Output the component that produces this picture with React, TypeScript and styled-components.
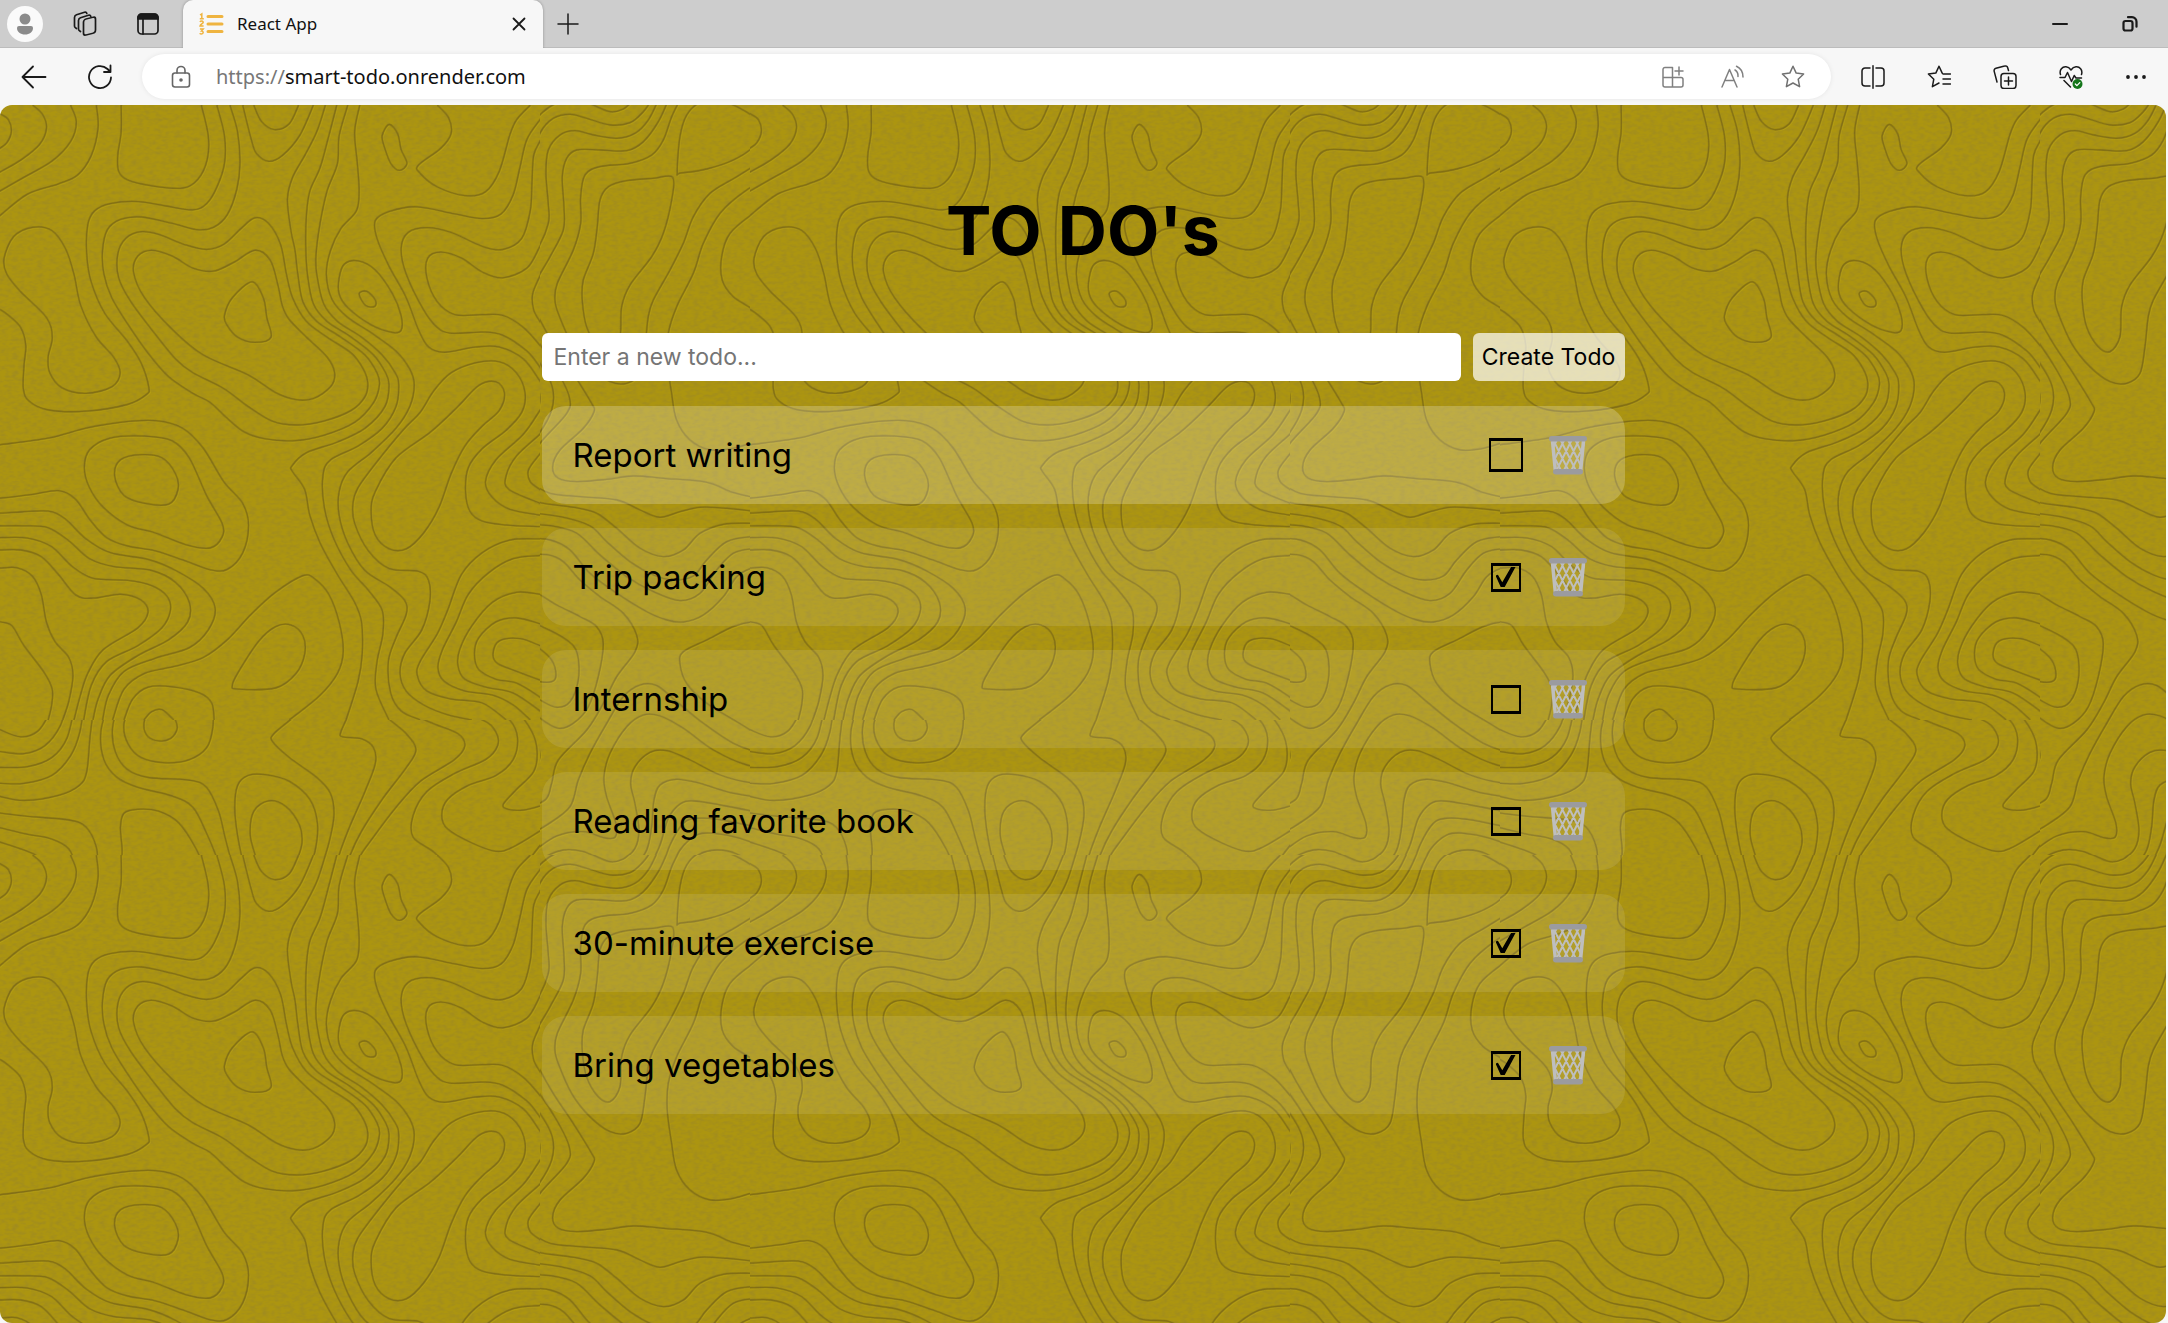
import React, { useState } from "react";
import styled, { createGlobalStyle } from "styled-components";

const uiFont = `"Noto Sans", "Open Sans", sans-serif`;
const appFont = `Inter, Roboto, sans-serif`;

const GlobalStyle = createGlobalStyle`
  *, *::before, *::after { box-sizing: border-box; }
  body { margin: 0; background: #f7f7f7; }
  button, input { font: inherit; color: inherit; }
`;

/* ---------- topographic backdrop ---------- */

type Sheet = {
  id: string;
  clip: { x: number; y: number; width: number; height: number };
  scale: [number, number];
  origin: [number, number];
  lines: string[];
};

const TILE = 750;

const sheets: Sheet[] = [
  {
    id: "nw",
    clip: { x: 0, y: 0, width: 540, height: 615 },
    scale: [2.904, 2.529],
    origin: [0, -5],
    lines: [
      "-15,28 0,35 25,50 33,80 20,108 0,122 -15,130",
      "95,13 125,38 135,72 115,112 60,152 0,182 -10,186",
      "205,13 222,55 205,105 150,155 60,200 0,230 -10,235",
      "280,13 285,70 265,140 225,190 170,212 80,238 0,292 -10,300",
      "352,13 352,80 342,140 345,180 370,202 440,217 530,223 575,200 602,150 605,90 585,13",
      "630,13 652,90 652,160 630,220 600,262 560,278 480,268 400,257 320,262 275,280 255,315 252,390 265,460 305,540 370,610 410,665 432,725 425,745 370,770 250,787 140,784 85,762 68,730 70,670 75,620 60,575 25,545 0,530 -10,526",
      "668,13 690,80 697,160 688,225 660,290 620,322 570,328 500,312 410,296 350,302 312,328 298,380 302,440 325,500 370,565 430,640 490,700 560,742 610,765 660,805 710,840 770,857 850,862 940,848 1030,815 1085,765 1102,720 1095,690 1060,645 990,600 920,560 880,510 865,440 857,380 845,330 835,250 850,195 885,140 920,80 945,13",
      "705,13 730,100 745,135 780,155 820,140 870,90 910,13",
      "737,13 760,55 797,75 840,60 867,13",
      "978,13 955,90 930,170 900,230 890,290 888,370 893,440 910,515 950,560 1020,600 1085,645 1120,690 1130,720 1118,775 1060,830 980,865 890,892 848,925 850,940 885,985 900,1050 930,1120 980,1200 1030,1270 1050,1320 1052,1400 1040,1470 1005,1568",
      "1010,13 985,90 980,160 950,230 930,310 918,390 920,440 940,515 980,560 1050,600 1110,645 1148,690 1158,720 1150,775 1110,830 1040,875 960,910 938,950 942,1030 970,1110 1020,1190 1070,1240 1110,1290 1112,1350 1095,1420 1092,1490 1130,1568",
      "1045,13 1030,80 1038,160 1043,230 1035,280 990,325 960,380 948,440 965,505 1010,550 1080,590 1150,635 1190,680 1203,720 1190,775 1150,830 1080,890 1010,940 985,990 985,1050 1010,1120 1060,1190 1130,1230 1175,1265 1180,1300 1150,1360 1128,1420 1135,1500 1165,1545 1220,1568",
      "1568,1079 1470,1075 1400,1065 1365,1040 1352,990 1360,930 1400,882 1470,835 1515,790 1525,740 1500,690 1450,662 1380,665 1310,690 1260,735 1220,790 1170,835 1090,920 1040,980 1025,1020 1030,1070 1070,1140 1130,1185 1215,1192 1245,1215 1248,1270 1225,1340 1175,1400 1162,1450 1180,1495 1230,1530 1300,1555 1370,1568",
      "1078,1040 1090,990 1150,905 1250,840 1330,775 1390,722 1440,713 1465,740 1450,785 1400,825 1350,875 1310,945 1275,1030 1230,1095 1180,1135 1130,1135 1090,1100 z",
      "1110,90 1130,62 1155,85 1165,125 1182,160 1160,178 1135,160 1117,120 z",
      "1270,13 1303,45 1310,85 1280,122 1215,165 1220,185 1270,220 1350,242 1410,232 1450,180 1480,90 1500,50 1540,13",
      "1580,40 1568,50 1530,100 1510,170 1490,240 1455,288 1400,300 1320,288 1210,270 1130,282 1090,305 1095,350 1130,420 1180,500 1215,580 1245,625 1290,638 1380,625 1450,625 1520,655 1568,710 1580,725",
      "1580,90 1568,105 1550,140 1545,210 1540,280 1515,350 1460,378 1400,370 1310,335 1240,323 1185,335 1165,375 1180,440 1230,530 1270,575 1310,590 1400,587 1460,595 1530,635 1568,675 1580,690",
      "1580,355 1568,370 1530,425 1460,450 1400,435 1340,400 1280,385 1242,400 1240,450 1270,510 1320,543 1400,543 1460,545 1520,575 1568,620 1580,635",
      "1580,425 1568,445 1547,490 1550,530 1568,560 1580,575",
      "1580,770 1568,785 1520,845 1440,910 1410,965 1430,1005 1480,1035 1568,1050 1580,1051",
      "1580,832 1568,845 1500,900 1470,950 1478,985 1568,1020 1580,1023",
      "1580,882 1568,895 1535,935 1540,965 1568,985 1580,990",
      "985,450 1000,415 1040,407 1090,430 1140,490 1165,545 1165,582 1140,588 1080,570 1010,525 985,490 z",
      "1043,490 1065,484 1090,505 1088,522 1062,520 z",
      "12,400 40,345 95,322 150,330 190,375 215,440 235,520 280,600 330,650 349,690 325,725 250,742 180,728 145,690 140,650 152,600 135,550 60,485 20,440 z",
      "652,545 675,500 732,460 765,500 775,550 787,600 740,613 690,600 660,570 z",
      "440,380 500,395 560,425 620,433 680,410 740,380 785,405 808,470 820,520 840,555 890,600 950,650 972,690 960,725 910,755 860,758 800,740 720,695 590,645 500,580 420,500 388,435 400,395 z",
      "740,298 780,312 815,365 832,440 850,500 890,560 950,600 1020,640 1055,680 1068,715 1060,750 1020,785 940,812 860,822 790,812 720,775 650,730 560,690 510,655 440,580 380,510 345,450 342,390 365,350 410,333 460,340 540,367 600,378 650,365 700,325 z",
      "-10,873 0,872 140,855 250,830 350,815 450,811 530,830 590,880 650,965 705,1020 722,1075 705,1145 660,1187 610,1188 530,1163 450,1140 370,1128 310,1107 260,1060 220,1010 170,988 90,998 0,1007 -10,1007",
      "-10,1045 0,1045 60,1042 140,1040 190,1060 250,1110 320,1145 430,1162 510,1190 590,1235 625,1285 605,1340 550,1385 450,1412 360,1445 315,1505 298,1568",
      "-10,1077 0,1077 70,1077 140,1082 200,1115 260,1160 330,1180 440,1190 510,1220 550,1270 545,1320 490,1365 400,1405 320,1455 285,1515 270,1568",
      "-10,1107 0,1107 80,1108 150,1130 210,1180 270,1210 370,1215 440,1228 485,1255 495,1290 470,1335 400,1380 310,1420 265,1480 243,1568",
      "-10,1138 0,1138 60,1138 120,1155 170,1200 220,1252 270,1260 350,1250 410,1265 430,1295 400,1335 300,1390 255,1450 232,1510 215,1568",
      "-10,1184 0,1184 50,1183 95,1205 120,1250 135,1320 160,1370 200,1410 212,1455 200,1520 182,1568",
      "-10,1319 0,1320 35,1330 70,1380 130,1450 152,1490 150,1530 140,1568",
      "840,1568 930,1505 980,1450 997,1395 985,1320 955,1250 915,1212 880,1203 800,1245 730,1300 660,1365 590,1410 510,1432 420,1450 360,1490 327,1568",
      "675,1480 690,1450 750,1370 800,1332 845,1328 880,1355 885,1400 860,1450 800,1487 690,1490 z",
      "360,1568 385,1515 430,1485 500,1484 580,1500 615,1525 622,1568",
      "418,1568 440,1547 470,1542 505,1568",
      "245,930 260,885 320,855 420,850 500,862 550,905 600,1000 645,1070 645,1105 610,1133 540,1125 450,1095 370,1075 300,1030 260,980 z",
      "333,950 350,910 410,897 470,905 510,945 517,985 490,1022 420,1020 360,1000 z",
      "1580,1110 1568,1110 1480,1113 1400,1145 1340,1200 1300,1290 1270,1350 1220,1420 1212,1455 1240,1495 1310,1515 1400,1525 1470,1568",
      "1580,1152 1568,1152 1490,1160 1420,1195 1360,1250 1325,1320 1285,1390 1272,1435 1290,1470 1350,1495 1430,1505 1490,1530 1540,1568",
      "1580,1252 1568,1250 1500,1245 1430,1270 1370,1330 1335,1390 1330,1430 1350,1465 1410,1485 1490,1500 1568,1545 1580,1555",
      "1580,1330 1568,1325 1500,1310 1440,1320 1390,1360 1378,1400 1390,1440 1440,1465 1500,1475 1568,1510 1580,1518",
      "1580,1385 1568,1380 1510,1362 1450,1368 1432,1400 1445,1425 1500,1445 1568,1467 1580,1470",
    ],
  },
  {
    id: "sw",
    clip: { x: 0, y: 615, width: 540, height: 135 },
    scale: [2.904, 2.517],
    origin: [0, 595],
    lines: [
      "-10,70 0,75 60,93 110,78 145,30 152,0",
      "-10,129 0,130 70,135 130,115 175,65 195,0",
      "-10,170 0,170 80,168 150,145 195,95 220,0",
      "-10,210 0,210 70,210 150,190 205,140 232,80 245,0",
      "-10,242 0,243 70,253 170,240 230,215 252,180 262,90 275,0",
      "317,0 293,80 302,150 340,195 400,220 500,242 560,270 600,335 635,410 650,460",
      "347,0 327,70 335,130 370,175 430,195 550,202 600,220 635,280 655,350 680,430",
      "387,0 360,60 372,110 410,145 480,158 550,150 600,120 618,70 620,0",
      "418,65 430,35 465,24 500,38 515,70 495,97 460,103 430,92 z",
      "-10,284 0,285 80,293 200,302 250,320 280,370 285,430",
      "-10,320 0,322 80,338 150,350 200,375 222,420",
      "-10,356 0,358 70,378 110,395 135,430",
      "350,430 355,380 350,320 360,285 400,275 460,280 520,310 570,375 600,440",
      "740,500 710,420 690,340 682,270 690,215 720,190 770,188 840,205 900,250 922,310 915,380 890,440",
      "745,400 727,340 737,280 780,254 830,268 870,315 877,360 862,405",
      "910,0 850,45 795,85 792,105 840,145 920,195 960,235 970,290 955,360 930,430",
      "1025,0 1010,40 990,80 995,93 1050,98 1085,120 1090,160 1060,230 1015,320 985,390 970,450",
      "1095,0 1120,40 1180,85 1208,125 1180,170 1110,250 1050,330 1015,395 1000,450",
      "1145,0 1180,30 1260,60 1330,85 1350,115 1320,150 1220,205 1150,270 1080,350 1045,395 1035,440",
      "1215,0 1290,25 1400,50 1440,80 1445,115 1410,150 1320,185 1240,230 1200,290 1200,345 1260,383 1300,420",
      "1310,0 1420,18 1480,50 1503,95 1490,150 1440,190 1360,215 1300,250 1283,290 1300,325 1370,360 1440,381 1490,370 1568,330 1580,323",
      "1420,0 1500,30 1545,80 1560,130 1550,180 1500,225 1462,262 1475,275 1520,277 1568,267 1580,262",
      "1515,0 1568,45 1580,60",
      "1580,360 1568,367 1530,410",
    ],
  },
  {
    id: "east",
    clip: { x: 540, y: 0, width: 210, height: 750 },
    scale: [3, 3],
    origin: [520, -5],
    lines: [
      "0,190 25,90 70,35 110,10 160,2 210,12 270,35 310,27 340,0",
      "0,415 30,360 38,260 38,180 60,100 100,55 150,43 200,55 270,75 330,68 370,35 395,0",
      "0,505 50,450 85,370 85,310 78,220 85,150 120,105 165,92 220,105 290,115 345,100 385,60 415,0",
      "780,1183 710,1192 640,1178 560,1147 430,1135 340,1128 260,1138 170,1145 115,1135 98,1100 120,1050 190,985 222,935 215,910 160,820 100,730 50,640 35,600 45,550 90,470 130,390 132,320 127,230 140,175 170,150 240,150 320,152 370,125 415,65 445,0",
      "780,150 650,230 570,280 520,350 490,430 450,510 400,600 385,650 375,740 360,820 320,850 270,845 210,800 155,730 115,640 105,600 112,550 160,450 182,370 182,290 195,225 240,200 330,190 395,165 430,120 455,50 480,0",
      "458,232 455,300 430,400 395,470 330,555 305,620 300,710 270,755 235,740 200,680 187,600 190,540 220,460 232,380 240,300 265,260 320,242 400,235 z",
      "472,215 480,110 500,45 540,8 600,3 660,25 710,60 722,95 700,140 640,180 560,207 482,219 z",
      "780,215 680,270 600,340 550,430 520,520 470,620 445,700 442,780 455,880 470,960 510,1020 570,1050 640,1045 720,1022 780,1015",
      "780,290 700,340 630,400 605,470 607,540 640,590 700,630 750,680 768,730 758,800 765,870 780,900",
      "0,670 50,720 110,810 148,890 140,940 60,1030 22,1100 35,1145 90,1180 180,1190 290,1200 360,1230 420,1252 480,1235 540,1222 620,1225 720,1235 780,1233",
      "0,720 60,790 97,860 95,930 50,1010 0,1055",
      "0,770 40,830 60,890 45,950 0,1005",
      "0,1190 70,1210 160,1222 230,1240 290,1285 360,1345 430,1370 490,1350 540,1300 610,1273 700,1270 780,1272",
      "0,1235 120,1250 210,1278 260,1325 330,1385 400,1425 460,1440 520,1428 560,1380 620,1325 700,1310 780,1313",
      "0,1273 90,1277 170,1300 240,1365 320,1430 400,1475 480,1502 540,1480 590,1410 640,1360 700,1347 780,1355",
      "0,1313 90,1320 150,1350 210,1420 290,1480 380,1535 440,1560 490,1566 550,1545 610,1490 650,1430 700,1403 740,1403 780,1425",
      "0,1365 80,1364 130,1385 180,1440 240,1490 310,1540 350,1605 345,1655 290,1730 250,1810 200,1890 115,1980 95,2050 75,2100 0,2133",
      "0,1473 50,1480 110,1515 180,1550 230,1580 250,1630 235,1730 205,1820 160,1870 115,1885 60,1855 0,1800",
      "0,1557 70,1582 140,1620 172,1660 175,1740 150,1805 110,1822 60,1800 0,1762",
      "0,1615 50,1640 95,1680 108,1725 95,1745 50,1743 0,1722",
      "0,1845 40,1900 60,1965 45,2000 0,2055",
      "0,2220 80,2175 150,2120 175,2040 210,1960 260,1870 310,1790 360,1755 410,1757 470,1805 550,1870 640,1930 720,1958 780,1961",
      "0,2290 40,2255 110,2208 190,2195 250,2213 285,2212 288,2170 260,2090 252,2030 270,1960 320,1880 370,1845 420,1848 490,1885 580,1950 680,1995 780,2006",
      "30,2320 70,2275 130,2250 190,2255 260,2284 310,2275 345,2245 357,2190 345,2110 332,2050 345,2000 390,1957 440,1952 510,1980 600,2025 690,2048 780,2050",
      "340,2310 380,2250 395,2180 402,2100 420,2055 470,2038 540,2050 640,2080 780,2100",
      "385,2310 420,2235 445,2155 480,2112 520,2103 600,2115 780,2150",
      "425,2310 450,2235 490,2170 530,2155 590,2158 680,2175 780,2200",
      "455,2310 480,2250 530,2205 580,2200 660,2215 780,2260",
      "500,2310 535,2265 590,2250 650,2262 720,2310",
      "790,1660 740,1590 700,1567 640,1580 560,1620 490,1655 480,1690 500,1750 560,1810 650,1865 720,1905 780,1908",
    ],
  },
];

/* Runs a Catmull-Rom curve through the points and returns it as Bezier segments. */
function contour(line: string, { scale, origin }: Sheet): string {
  const closed = line.endsWith("z");
  const pts = line
    .replace("z", "")
    .trim()
    .split(" ")
    .map((pair) => {
      const [x, y] = pair.split(",").map(Number);
      return [x / scale[0] + origin[0], y / scale[1] + origin[1]];
    });
  const n = pts.length;
  const at = (i: number) => (closed ? pts[(i + n) % n] : pts[Math.max(0, Math.min(n - 1, i))]);
  const f = (v: number) => v.toFixed(1);
  let d = `M${f(pts[0][0])} ${f(pts[0][1])}`;
  for (let i = 0; i < (closed ? n : n - 1); i++) {
    const [a, b, c, e] = [at(i - 1), at(i), at(i + 1), at(i + 2)];
    d += `C${f(b[0] + (c[0] - a[0]) / 6)} ${f(b[1] + (c[1] - a[1]) / 6)} ${f(c[0] - (e[0] - b[0]) / 6)} ${f(
      c[1] - (e[1] - b[1]) / 6
    )} ${f(c[0])} ${f(c[1])}`;
  }
  return closed ? d + "Z" : d;
}

const sheetPaths = sheets.map((s) => ({ ...s, d: s.lines.map((l) => contour(l, s)).join("") }));

const BackdropSvg = styled.svg`
  position: absolute;
  inset: 0;
  width: 100%;
  height: 100%;
`;

function Backdrop() {
  return (
    <BackdropSvg aria-hidden="true">
      <defs>
        <filter id="grain" x="0" y="0" width="100%" height="100%">
          <feTurbulence type="fractalNoise" baseFrequency="0.16 0.3" numOctaves="2" seed="4" />
          <feColorMatrix values="0 0 0 0 0.24  0 0 0 0 0.18  0 0 0 0 0.05  0.6 0 0 0 -0.22" />
        </filter>
        <clipPath id="basket-body">
          <path d="M2 5h34l-3.500 29h-27z" />
        </clipPath>
        {sheetPaths.map((s) => (
          <clipPath key={s.id} id={`clip-${s.id}`}>
            <rect {...s.clip} />
          </clipPath>
        ))}
        <pattern id="topo" width={TILE} height={TILE} patternUnits="userSpaceOnUse">
          {sheetPaths.map((s) => (
            <g key={s.id} clipPath={`url(#clip-${s.id})`} fill="none">
              <path d={s.d} stroke="#c4ad16" strokeOpacity="0.4" strokeWidth="1.200" transform="translate(1 1)" />
              <path d={s.d} stroke="#5c4c14" strokeOpacity="0.2" strokeWidth="2.400" />
              <path d={s.d} stroke="#5c4c14" strokeOpacity="0.36" strokeWidth="1.300" />
            </g>
          ))}
        </pattern>
      </defs>
      <rect width="100%" height="100%" fill="#ac9510" />
      <rect width="100%" height="100%" filter="url(#grain)" />
      <rect width="100%" height="100%" fill="url(#topo)" />
    </BackdropSvg>
  );
}

/* ---------- browser frame ---------- */

const Shell = styled.div`
  min-height: 100vh;
  display: flex;
  flex-direction: column;
  background: #f7f7f7;
  font-family: ${uiFont};
`;

const TabStrip = styled.header`
  display: flex;
  align-items: center;
  height: 48px;
  padding: 0 3px 0 7px;
  background: #cdcdcd;
  box-shadow: inset 0 -1px 0 #bcbcbc;
`;

const IconButton = styled.button<{ $width: number; $tone?: string }>`
  display: flex;
  align-items: center;
  justify-content: center;
  flex: none;
  width: ${(p) => p.$width}px;
  height: 44px;
  padding: 0;
  border: 0;
  background: none;
  color: ${(p) => p.$tone ?? "#1a1a1a"};
`;

const Avatar = styled.button`
  display: flex;
  flex: none;
  width: 36px;
  height: 36px;
  margin-right: 10px;
  padding: 0;
  border: 0;
  border-radius: 50%;
  background: #fafafa;
`;

const Tab = styled.div`
  display: flex;
  align-items: center;
  gap: 13px;
  align-self: stretch;
  width: 360px;
  margin-left: 4px;
  padding: 0 3px 0 15px;
  border-radius: 10px 10px 0 0;
  background: #f7f7f7;
  box-shadow: 0 0 3px rgba(0, 0, 0, 0.3);
  clip-path: inset(0 -4px 0 -4px);
  font-size: 17px;
  line-height: 24px;
`;

const TabTitle = styled.span`
  flex: 1;
  color: #111;
`;

const Spacer = styled.div`
  flex: 1;
`;

const Toolbar = styled.nav`
  display: flex;
  align-items: center;
  height: 57px;
  padding-left: 1px;
`;

const AddressBar = styled.div`
  display: flex;
  align-items: center;
  flex: 1;
  height: 45px;
  margin: 0 9px;
  padding: 0 8px;
  border-radius: 23px;
  background: #fff;
  box-shadow: 0 0 5px rgba(0, 0, 0, 0.08);
`;

const Address = styled.div`
  flex: 1;
  padding-left: 5px;
  font-size: 20px;
  line-height: 28px;
  color: #111;
`;

const Scheme = styled.span`
  color: #777;
`;

const Line = ({ size = 24, children, w = 1.5 }: { size?: number; w?: number; children: React.ReactNode }) => (
  <svg
    width={size}
    height={size}
    viewBox={`0 0 ${size} ${size}`}
    fill="none"
    stroke="currentColor"
    strokeWidth={w}
    strokeLinecap="round"
    strokeLinejoin="round"
    aria-hidden="true"
  >
    {children}
  </svg>
);

const STAR = "M12 1.2l3.2 6.9 7.4.9-5.4 5.2 1.4 7.5-6.6-3.7-6.6 3.7 1.4-7.5L1.400 9l7.4-.9z";

function BrowserFrame({ children }: { children: React.ReactNode }) {
  return (
    <Shell>
      <TabStrip>
        <Avatar aria-label="Profile">
          <svg width="36" height="36" viewBox="0 0 36 36" fill="#8b8b8b" aria-hidden="true">
            <circle cx="18" cy="13" r="5.500" />
            <path d="M10 22a2 2 0 0 1 2-2h12a2 2 0 0 1 2 2c0 4-3.500 6.500-8 6.500s-8-2.500-8-6.500z" />
          </svg>
        </Avatar>
        <IconButton $width={63} aria-label="Workspaces">
          <Line size={26} w={1.7}>
            <rect x="11.500" y="7.500" width="12" height="16" rx="2.500" transform="skewY(-14) translate(0 4)" />
            <path d="M8.500 20.500l-1.200-.9a2 2 0 0 1-.8-1.600V9.500a3 3 0 0 1 2-2.700l8-2.600a1.800 1.800 0 0 1 2.300 1.200" />
            <path d="M4.500 17.500l-1.200-.9a2 2 0 0 1-.8-1.600V6.500a3 3 0 0 1 2-2.700l8-2.600A1.800 1.800 0 0 1 14.800 2.400" />
          </Line>
        </IconButton>
        <IconButton $width={63} aria-label="Tab actions">
          <Line size={24} w={1.7}>
            <rect x="2" y="2" width="20" height="20" rx="3.500" />
            <path d="M2 7V5.500A3.500 3.500 0 0 1 5.500 2h13A3.500 3.500 0 0 1 22 5.500V7z" fill="currentColor" />
            <path d="M7 7v15" />
          </Line>
        </IconButton>
        <Tab>
          <svg width="26" height="24" viewBox="0 0 26 24" fill="none" stroke="#efb440" aria-hidden="true">
            <path d="M10 4.500h14M10 12h14M10 19.500h14" strokeWidth="3" strokeLinecap="round" />
            <path
              d="M2 3l1.800-1.200V6.500M1.800 6.800h4M2 10c.6-1.300 3.400-1.200 3.200.4-.1 1.200-3 2-3.200 3.600h3.600M1.900 17h3.300l-1.700 2c2.400.2 2.200 3-.1 3-.8 0-1.300-.3-1.700-.8"
              strokeWidth="1.500"
            />
          </svg>
          <TabTitle>React App</TabTitle>
          <IconButton $width={42} aria-label="Close tab">
            <Line size={16} w={1.8}>
              <path d="M2.500 2.500l11 11M13.500 2.500l-11 11" />
            </Line>
          </IconButton>
        </Tab>
        <IconButton $width={50} aria-label="New tab">
          <Line size={22}>
            <path d="M11 1v20M1 11h20" />
          </Line>
        </IconButton>
        <Spacer />
        <IconButton $width={70} aria-label="Minimize">
          <Line size={18} w={2}>
            <path d="M2 9h14" />
          </Line>
        </IconButton>
        <IconButton $width={70} aria-label="Restore">
          <Line size={18} w={2.2}>
            <rect x="2.500" y="6" width="9" height="9.500" rx="2" />
            <path d="M7 2.200h4a4.500 4.500 0 0 1 4.500 4.500v5" />
          </Line>
        </IconButton>
      </TabStrip>

      <Toolbar>
        <IconButton $width={66} aria-label="Back">
          <Line size={26} w={1.8}>
            <path d="M24.500 13H1.500M12 2.500L1.500 13 12 23.500" />
          </Line>
        </IconButton>
        <IconButton $width={66} aria-label="Refresh">
          <Line size={26} w={1.8}>
            <path d="M24 13.500A11 11 0 1 1 20.500 5l2.500 2.500M23.500 1.500v6.500h-6.500" />
          </Line>
        </IconButton>
        <AddressBar>
          <IconButton $width={61} $tone="#666" aria-label="Site information">
            <Line size={24} w={1.6}>
              <rect x="3.500" y="8" width="17" height="14" rx="2.500" />
              <path d="M8 8V5.500a4 4 0 0 1 8 0V8" />
              <circle cx="12" cy="15" r="1" fill="currentColor" />
            </Line>
          </IconButton>
          <Address>
            <Scheme>https://</Scheme>smart-todo.onrender.com
          </Address>
          <IconButton $width={60} $tone="#808080" aria-label="Install app">
            <Line size={24}>
              <path d="M11.500 2.500H4a2 2 0 0 0-2 2V20a2 2 0 0 0 2 2h16a2 2 0 0 0 2-2v-5.500a2 2 0 0 0-2-2H2M11.500 2.500V22M18 2v8M14 6h8" />
            </Line>
          </IconButton>
          <IconButton $width={60} $tone="#808080" aria-label="Read aloud">
            <Line size={24}>
              <path d="M1 22L8.500 4.500 16 22M3.800 15.500h9.400M14 5c2.200 1.300 3.200 3.500 3 6.500M15.500 1.200c4.300 2 6.500 5.800 6.500 10.800" />
            </Line>
          </IconButton>
          <IconButton $width={60} $tone="#707070" aria-label="Add to favorites">
            <Line>
              <path d={STAR} />
            </Line>
          </IconButton>
        </AddressBar>
        <IconButton $width={66} aria-label="Split screen">
          <Line>
            <path d="M9 3H4a3 3 0 0 0-3 3v12a3 3 0 0 0 3 3h5M15 3h5a3 3 0 0 1 3 3v12a3 3 0 0 1-3 3h-5M12 0.800v22.400" />
          </Line>
        </IconButton>
        <IconButton $width={66} aria-label="Favorites">
          <Line>
            <path d="M15.200 8.100L12 1.200 8.800 8.100 1.400 9l5.400 5.200-1.400 7.500 6.600-3.700M16 9h7.500M16 14h7.500M16 19h7.500" />
          </Line>
        </IconButton>
        <IconButton $width={66} aria-label="Collections">
          <Line>
            <rect x="8" y="8.500" width="15" height="15" rx="3" />
            <path d="M15.500 12v8M11.500 16h8M15.500 5.500l-.8-2.800A2.500 2.500 0 0 0 11.600 1L3 3.300A2.500 2.500 0 0 0 1.200 6.400L4 17" />
          </Line>
        </IconButton>
        <IconButton $width={66} aria-label="Browser essentials">
          <Line>
            <path d="M1.500 9.500C0 4.500 3.500 1.500 7 1.800c2.300.2 3.800 1.500 5 3.200 1.200-1.700 2.700-3 5-3.200 3.500-.3 7 2.700 5.500 7.700M1 12.500h5l2.500-5 4 9 2.700-6 1.800 2.500h5.500M5 15.500l6.500 6.500" />
            <circle cx="18.500" cy="19" r="5" fill="#14761a" stroke="none" />
            <path d="M16.300 19l1.600 1.600 2.900-3" stroke="#fff" strokeWidth="1.300" />
          </Line>
        </IconButton>
        <IconButton $width={64} aria-label="Settings and more">
          <svg width="24" height="24" viewBox="0 0 24 24" fill="currentColor" aria-hidden="true">
            <circle cx="4" cy="12" r="1.900" />
            <circle cx="12" cy="12" r="1.900" />
            <circle cx="20" cy="12" r="1.900" />
          </svg>
        </IconButton>
      </Toolbar>
      {children}
    </Shell>
  );
}

/* ---------- todo page ---------- */

const Page = styled.main`
  position: relative;
  flex: 1;
  margin-right: 2px;
  border-radius: 12px;
  overflow: hidden;
  font-family: ${appFont};
  color: #000;
`;

const Content = styled.div`
  position: relative;
  width: 50%;
  margin: 0 auto;
  padding: 77px 0 48px;
`;

const Title = styled.h1`
  margin: 0 0 55px;
  font-size: 68px;
  line-height: 96px;
  font-weight: 700;
  text-align: center;
`;

const TodoForm = styled.form`
  display: flex;
  gap: 12px;
  margin-bottom: 25px;
  font-size: 23px;
  line-height: 30px;
`;

const TodoInput = styled.input`
  flex: 1;
  min-width: 0;
  height: 48px;
  padding: 0 12px;
  border: 0;
  border-radius: 6px;
  background: #fff;
  &::placeholder {
    color: #757575;
    opacity: 1;
  }
`;

const CreateButton = styled.button`
  width: 152px;
  height: 48px;
  padding: 0;
  border: 0;
  border-radius: 6px;
  background: rgba(255, 255, 255, 0.7);
  white-space: nowrap;
`;

const TodoList = styled.ul`
  display: flex;
  flex-direction: column;
  gap: 24px;
  margin: 0;
  padding: 0;
  list-style: none;
`;

const TodoRow = styled.li<{ $active: boolean }>`
  display: flex;
  align-items: center;
  min-height: 98px;
  padding: 0 38px 0 31px;
  border-radius: 24px;
  background: rgba(255, 255, 255, ${(p) => (p.$active ? 0.22 : 0.1)});
`;

const TodoLabel = styled.label`
  flex: 1;
  font-size: 33px;
  line-height: 48px;
`;

const CheckCell = styled.span`
  display: flex;
  justify-content: center;
  width: 36px;
  margin-right: 25px;
`;

const CheckBox = styled.input<{ $large: boolean }>`
  appearance: none;
  display: grid;
  place-content: center;
  width: ${(p) => (p.$large ? 34 : 30)}px;
  height: ${(p) => (p.$large ? 34 : 29)}px;
  margin: 0;
  border: solid #000;
  border-width: 3px 2px;
  &:checked::after {
    content: "";
    width: 20px;
    height: 20px;
    background: #000;
    clip-path: polygon(0 42%, 12% 39%, 34% 76%, 78% 0, 100% 0, 46% 100%, 26% 100%);
  }
`;

const TrashButton = styled.button`
  display: flex;
  padding: 0;
  border: 0;
  background: none;
`;

const weave = Array.from({ length: 12 }, (_, k) => {
  const x = 19 + (k - 6) * 7.4;
  return `M${x} 4l15.500 31M${x + 3.700} 4l-15.500 31`;
}).join("");

const Trash = () => (
  <svg width="38" height="39" viewBox="0 0 38 39" fill="none" aria-hidden="true">
    <g stroke="#bebebe">
      <path d={weave} strokeWidth="2" clipPath="url(#basket-body)" />
      <path d="M3.500 5l2.800 29M34.500 5l-2.800 29" strokeWidth="3.500" />
    </g>
    <rect x="0" y="0" width="38" height="5.500" rx="2.700" fill="#9b9b9f" />
    <rect x="4" y="33" width="30" height="5.500" rx="2.700" fill="#9b9b9f" />
  </svg>
);

const initialTodos = [
  { text: "Report writing", done: false },
  { text: "Trip packing", done: true },
  { text: "Internship", done: false },
  { text: "Reading favorite book", done: false },
  { text: "30-minute exercise", done: true },
  { text: "Bring vegetables", done: true },
];

export default function App() {
  const [todos, setTodos] = useState(initialTodos);
  const [draft, setDraft] = useState("");
  const [active, setActive] = useState(0);

  const create = (e: React.FormEvent) => {
    e.preventDefault();
    if (!draft.trim()) return;
    setTodos([...todos, { text: draft.trim(), done: false }]);
    setDraft("");
  };

  return (
    <BrowserFrame>
      <GlobalStyle />
      <Page>
        <Backdrop />
        <Content>
          <Title>TO DO's</Title>
          <TodoForm onSubmit={create}>
            <TodoInput
              aria-label="New todo"
              placeholder="Enter a new todo..."
              value={draft}
              onChange={(e) => setDraft(e.target.value)}
            />
            <CreateButton type="submit">Create Todo</CreateButton>
          </TodoForm>
          <TodoList>
            {todos.map((todo, i) => (
              <TodoRow key={i} $active={i === active} onMouseEnter={() => setActive(i)}>
                <TodoLabel htmlFor={`todo-${i}`}>{todo.text}</TodoLabel>
                <CheckCell>
                  <CheckBox
                    id={`todo-${i}`}
                    type="checkbox"
                    $large={i === active}
                    checked={todo.done}
                    onChange={() => setTodos(todos.map((t, j) => (j === i ? { ...t, done: !t.done } : t)))}
                  />
                </CheckCell>
                <TrashButton
                  aria-label={`Delete ${todo.text}`}
                  onClick={() => setTodos(todos.filter((_, j) => j !== i))}
                >
                  <Trash />
                </TrashButton>
              </TodoRow>
            ))}
          </TodoList>
        </Content>
      </Page>
    </BrowserFrame>
  );
}
